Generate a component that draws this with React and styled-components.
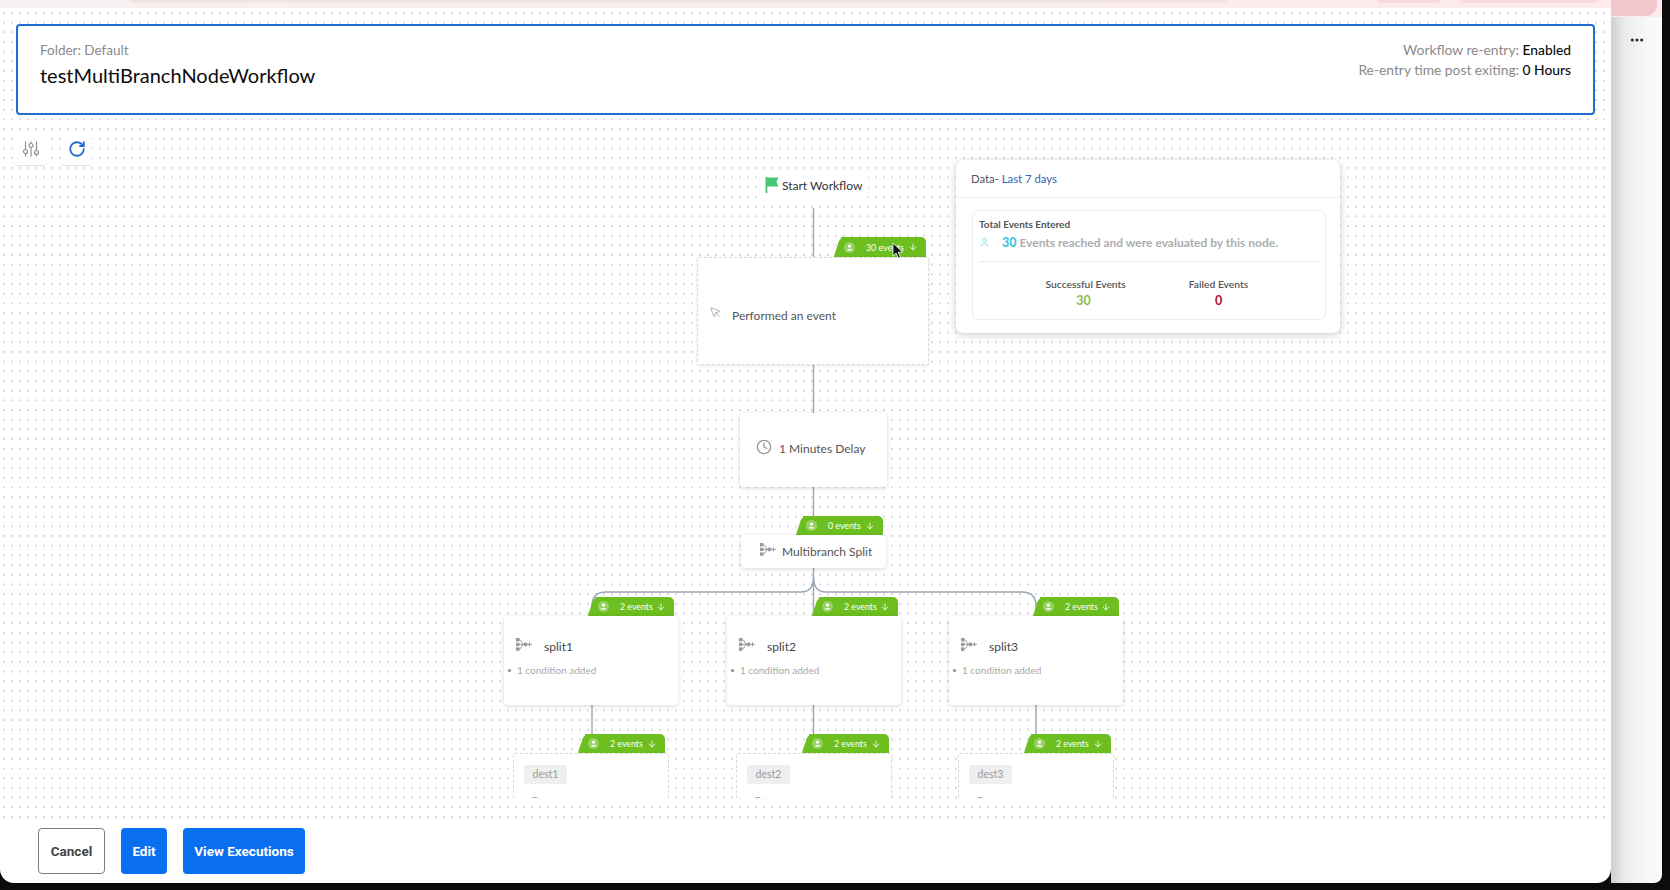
import styled, { createGlobalStyle } from 'styled-components'
import { ArrowDown, Clock, Ellipsis, MousePointer, RotateCw, User } from 'lucide-react'

const GlobalStyle = createGlobalStyle`
  html, body {
    margin: 0;
    background: #0d0c0a;
  }
  * {
    box-sizing: border-box;
  }
`

const Page = styled('div')`
  display: flex;
  width: 1670px;
  height: 890px;
  overflow: hidden;
  background: #0d0c0a;
  font-family: Lato, 'Noto Sans', sans-serif;
  color: #555;
`
const Modal = styled('div')`
  display: flex;
  flex-direction: column;
  width: 1611px;
  height: 883px;
  background: #fff;
  border-radius: 0 0 14px 14px;
  overflow: hidden;
`
const TopStrip = styled('div')`
  display: flex;
  gap: 20px;
  height: 8px;
  padding-left: 130px;
  background: linear-gradient(90deg, #f8f1f1, #fdeaed);
`
const TopPill = styled('div')`
  width: ${({ $width }) => $width}px;
  margin-left: ${({ $offset }) => $offset || 0}px;
  height: 3px;
  border-radius: 0 0 6px 6px;
  background: ${({ $color }) => $color};
`
const Canvas = styled('div')`
  display: flex;
  flex-direction: column;
  flex: 1;
  padding: 16px 0 20px;
  background-color: #fff;
  background-image: radial-gradient(circle, #dadada 0.75px, transparent 1.1px);
  background-size: 8px 9.7px;
`
const HeaderCard = styled('div')`
  display: flex;
  justify-content: space-between;
  height: 91px;
  margin: 0 16px;
  padding: 14px 22px 0 22px;
  background: #fff;
  border: 2px solid #1f6fd0;
  border-radius: 4px;
`
const FolderLabel = styled('div')`
  margin-top: 1px;
  font-size: 13.5px;
  line-height: 18px;
  color: #8a8a8a;
`
const WorkflowName = styled('div')`
  margin-top: 4px;
  font-size: 20px;
  line-height: 24px;
  color: #0c0c0c;
`
const MetaColumn = styled('div')`
  display: flex;
  flex-direction: column;
  align-items: flex-end;
`
const MetaRow = styled('div')`
  font-size: 13.8px;
  line-height: 19.5px;
  color: #8a8a8a;
  b {
    font-weight: 500;
    color: #0c0c0c;
  }
`
const Toolbar = styled('div')`
  display: flex;
  gap: 15px;
  height: 32px;
  margin: 18px 0 0 15px;
`
const ToolButton = styled('div')`
  display: flex;
  align-items: center;
  justify-content: center;
  width: 31px;
  background: #fff;
  border-radius: 3px;
  box-shadow: 0 1px 1px rgba(0, 0, 0, 0.12);
  color: ${({ $color }) => $color};
`
const Diagram = styled('div')`
  position: relative;
  flex: 1;
`
const Connectors = styled('svg')`
  position: absolute;
  left: 0;
  top: 0;
  width: 100%;
  height: 100%;
`
const StartChip = styled('div')`
  position: absolute;
  left: 760px;
  top: 5px;
  display: flex;
  align-items: center;
  gap: 3px;
  width: 108px;
  height: 30px;
  padding-left: 5px;
  background: #fff;
  border-radius: 4px;
  box-shadow: 0 0 2px rgba(0, 0, 0, 0.08);
  font-size: 12px;
  white-space: nowrap;
  color: #333;
`
const NodeCard = styled('div')`
  position: absolute;
  left: ${({ $x }) => $x}px;
  top: ${({ $y }) => $y}px;
  width: ${({ $w }) => $w}px;
  height: ${({ $h }) => $h}px;
  padding: ${({ $pt }) => $pt || 0}px 0 ${({ $pb }) => $pb || 0}px;
  display: flex;
  align-items: center;
  background: #fff;
  border-radius: 4px;
  box-shadow: 0 1px 4px rgba(0, 0, 0, 0.16);
  font-size: 12px;
  color: #555;
`
const DashedCard = styled(NodeCard)`
  border: 1px dashed #d9d9d9;
  border-radius: 2px;
  box-shadow: 0 1px 3px rgba(0, 0, 0, 0.1);
`
const SplitCard = styled('div')`
  position: absolute;
  left: ${({ $x }) => $x}px;
  top: 451px;
  width: 174px;
  height: 89px;
  padding: 22px 0 0 12px;
  background: #fff;
  border-radius: 4px;
  box-shadow: 0 1px 4px rgba(0, 0, 0, 0.16);
`
const SplitTitle = styled('div')`
  display: flex;
  align-items: center;
  gap: 11px;
  font-size: 12px;
  line-height: 18px;
  color: #444;
  svg {
    margin-top: -5px;
  }
`
const ConditionRow = styled('div')`
  display: flex;
  align-items: center;
  gap: 6px;
  margin: 7px 0 0 -8px;
  font-size: 10px;
  line-height: 14px;
  color: #a8a8a8;
  &::before {
    content: '';
    width: 3px;
    height: 3px;
    border-radius: 50%;
    background: #888;
  }
`
const DestCard = styled('div')`
  position: absolute;
  left: ${({ $x }) => $x}px;
  top: 588px;
  width: 156px;
  height: 45px;
  overflow: hidden;
  padding: 11px 0 0 10px;
  background: #fff;
  border: 1px dashed #d9d9d9;
  border-bottom: 0;
  border-radius: 2px 2px 0 0;
`
const DestChip = styled('div')`
  width: 43px;
  height: 19px;
  background: #efefef;
  border-radius: 2px;
  font-size: 10.5px;
  line-height: 19px;
  text-align: center;
  color: #9a9a9a;
`
const DestDot = styled('div')`
  width: 12px;
  height: 12px;
  margin: 13px 0 0 5px;
  border: 1.5px solid #999;
  border-radius: 50%;
`
const Badge = styled('div')`
  position: absolute;
  left: ${({ $x }) => $x + 7}px;
  top: ${({ $y }) => $y}px;
  width: ${({ $w }) => $w - 7}px;
  height: ${({ $h }) => $h || 19}px;
  display: flex;
  align-items: center;
  padding-left: 3px;
  background: #6cbf1f;
  border-radius: 0 5px 0 0;
  font-size: 8.8px;
  color: #fff;
  &::before {
    content: '';
    position: absolute;
    left: -4px;
    top: 0;
    bottom: 0;
    width: 14px;
    background: #6cbf1f;
    border-radius: 5px 0 0 0;
    transform: skewX(-18deg);
  }
`
const BadgeIcon = styled('svg')`
  position: relative;
  width: 11px;
  height: 11px;
  margin-right: 11px;
`
const BadgeText = styled('span')`
  position: relative;
  white-space: nowrap;
`
const BadgeArrow = styled('span')`
  display: flex;
  margin-left: auto;
  margin-right: 8px;
`
const Tooltip = styled('div')`
  position: absolute;
  left: 956px;
  top: -5px;
  width: 384px;
  height: 173px;
  background: #fff;
  border-radius: 8px;
  box-shadow: 0 2px 8px rgba(0, 0, 0, 0.2);
`
const TooltipHead = styled('div')`
  height: 38px;
  padding-left: 15px;
  border-bottom: 1.5px solid #ececec;
  font-size: 11.3px;
  line-height: 38px;
  color: #555;
  span {
    color: #2f63b5;
  }
`
const TooltipBody = styled('div')`
  height: 110px;
  margin: 12px 14px 0 16px;
  padding: 6px 6px 0;
  border: 1px solid #ececec;
  border-radius: 7px;
`
const TotalTitle = styled('div')`
  font-size: 10px;
  font-weight: 700;
  line-height: 15px;
  color: #555;
`
const TotalRow = styled('div')`
  display: flex;
  align-items: center;
  gap: 12px;
  height: 30px;
  padding-bottom: 8px;
  border-bottom: 1px solid #ececec;
  font-size: 12px;
  line-height: 15px;
  font-weight: 700;
  color: #adadad;
  b {
    font-size: 12.5px;
    color: #3cc6e2;
  }
`
const Stats = styled('div')`
  display: flex;
  justify-content: center;
  gap: 59px;
  margin-top: 15px;
  padding-left: 4px;
`
const Stat = styled('div')`
  width: 76px;
  text-align: center;
  font-size: 10.3px;
  line-height: 15px;
  color: #555;
  font-weight: 600;
  white-space: nowrap;
  b {
    display: block;
    margin-top: 1px;
    font-size: 12.5px;
    font-weight: 700;
    color: ${({ $color }) => $color};
  }
`
const Cursor = styled('svg')`
  position: absolute;
  left: 892px;
  top: 77px;
  width: 12px;
  height: 17px;
`
const Footer = styled('div')`
  display: flex;
  gap: 16px;
  height: 65px;
  padding: 10px 0 0 38px;
`
const Button = styled('div')`
  display: flex;
  align-items: center;
  justify-content: center;
  width: ${({ $w }) => $w}px;
  height: 46px;
  border-radius: 4px;
  font-family: Roboto, sans-serif;
  font-size: 13.5px;
  font-weight: 700;
  background: ${({ $outline }) => ($outline ? '#fff' : '#0a6fee')};
  border: ${({ $outline }) => ($outline ? '1px solid #7d7d7d' : '0')};
  color: ${({ $outline }) => ($outline ? '#444' : '#fff')};
`
const BackPanel = styled('div')`
  display: flex;
  flex-direction: column;
  width: 51px;
  height: 883px;
  border-radius: 0 0 8px 0;
  overflow: hidden;
  background: linear-gradient(90deg, #cfcfcf, #ececec 14px, #f7f7f7 34px, #fbfbfb);
`
const BackStrip = styled('div')`
  height: 17px;
  padding-right: 5px;
  background: #fdeaed;
`
const BackPill = styled('div')`
  height: 16px;
  background: #f3c6cc;
  border-radius: 0 0 12px 0;
`
const MoreIcon = styled('div')`
  display: flex;
  justify-content: center;
  margin-top: 15px;
  color: #222;
`
const IconSlot = styled('span')`
  display: flex;
  margin: ${({ $margin }) => $margin};
`

const FlagIcon = () => (
  <svg width="14" height="16" viewBox="0 0 14 16">
    <rect x="0.5" y="0" width="1.8" height="16" fill="#48c774" />
    <path d="M2 0.5 H13.5 L11.5 5 L13.5 9.5 H2 Z" fill="#48c774" />
  </svg>
)

const BranchIcon = () => (
  <svg width="17" height="13" viewBox="0 0 17 13" fill="none" stroke="#999" strokeWidth="1">
    <rect x="0.5" y="0.5" width="2.4" height="2.4" fill="#999" />
    <rect x="0.5" y="5.2" width="2.4" height="2.4" fill="#999" />
    <rect x="0.5" y="9.9" width="2.4" height="2.4" fill="#999" />
    <path d="M3 1.7 C6 1.7 5.5 6.4 8 6.4 M3 6.4 H8 M3 11 C6 11 5.5 6.4 8 6.4" />
    <circle cx="9.5" cy="6.4" r="1.6" fill="#999" />
    <path d="M11 6.4 H16 M13.5 4.4 V8.4" />
  </svg>
)

const TuneIcon = () => (
  <svg width="16" height="16" viewBox="0 0 16 16" fill="none" stroke="#8f8f8f" strokeWidth="1.2">
    <path d="M2.5 0.5 V8.5 M2.5 12.5 V15.5 M8 0.5 V2.5 M8 6.5 V15.5 M13.5 0.5 V9.5 M13.5 13.5 V15.5" />
    <circle cx="2.5" cy="10.5" r="2" />
    <circle cx="8" cy="4.5" r="2" />
    <circle cx="13.5" cy="11.5" r="2" />
  </svg>
)

const EventBadge = ({ x, y, w, h, label }) => (
  <Badge $x={x} $y={y} $w={w} $h={h}>
    <BadgeIcon viewBox="0 0 12 12">
      <circle cx="6" cy="6" r="6" fill="rgba(255,255,255,0.3)" />
      <circle cx="6" cy="4.4" r="1.8" fill="#fff" />
      <path d="M2.8 9.4 C3 7.2 9 7.2 9.2 9.4 Z" fill="#fff" />
    </BadgeIcon>
    <BadgeText>{label}</BadgeText>
    <BadgeArrow>
      <ArrowDown size={10} strokeWidth={2} />
    </BadgeArrow>
  </Badge>
)

const splits = [
  { name: 'split1', x: 504, badge: 588 },
  { name: 'split2', x: 727, badge: 812 },
  { name: 'split3', x: 949, badge: 1033 },
]

const dests = [
  { name: 'dest1', x: 513, badge: 578 },
  { name: 'dest2', x: 736, badge: 802 },
  { name: 'dest3', x: 958, badge: 1024 },
]

const App = () => (
  <Page>
    <GlobalStyle />
    <Modal>
      <TopStrip>
        <TopPill $width={1097} $color="#f1e6e6" />
        <TopPill $width={63} $offset={130} $color="#fadadf" />
        <TopPill $width={137} $color="#fadadf" />
      </TopStrip>
      <Canvas>
        <HeaderCard>
          <div>
            <FolderLabel>Folder: Default</FolderLabel>
            <WorkflowName>testMultiBranchNodeWorkflow</WorkflowName>
          </div>
          <MetaColumn>
            <MetaRow>
              Workflow re-entry: <b>Enabled</b>
            </MetaRow>
            <MetaRow>
              Re-entry time post exiting: <b>0 Hours</b>
            </MetaRow>
          </MetaColumn>
        </HeaderCard>
        <Toolbar>
          <ToolButton>
            <TuneIcon />
          </ToolButton>
          <ToolButton $color="#1f6fd0">
            <RotateCw size={18} strokeWidth={2.4} />
          </ToolButton>
        </Toolbar>
        <Diagram>
          <Connectors fill="none" stroke="#9aa7b5" strokeWidth="1.4">
            <path d="M813.5 43 V427" />
            <path d="M813.5 412 Q813.5 427 801 427 H606 Q592 427 592 441 V452" />
            <path d="M813.5 412 Q813.5 427 826 427 H1022 Q1036 427 1036 441 V452" />
            <path d="M813.5 427 V452" />
            <path d="M592 540 V570 M813.5 540 V570 M1036 540 V570" />
          </Connectors>
          <StartChip>
            <FlagIcon />
            Start Workflow
          </StartChip>
          <EventBadge x={834} y={72} w={92} h={20} label="30 events" />
          <DashedCard $x={697} $y={92} $w={232} $h={108} $pt={8}>
            <IconSlot $margin="-6px 10px 0 11px">
              <MousePointer size={13} color="#9aa3a8" strokeWidth={1.5} />
            </IconSlot>
            Performed an event
          </DashedCard>
          <NodeCard $x={740} $y={248} $w={147} $h={74} $pb={4}>
            <IconSlot $margin="-2px 7px 0 16px">
              <Clock size={16} color="#999" strokeWidth={2} />
            </IconSlot>
            1 Minutes Delay
          </NodeCard>
          <EventBadge x={796} y={351} w={87} label="0 events" />
          <NodeCard $x={741} $y={370} $w={145} $h={33}>
            <IconSlot $margin="-4px 5px 0 19px">
              <BranchIcon />
            </IconSlot>
            Multibranch Split
          </NodeCard>
          {splits.map((split) => (
            <div key={split.name}>
              <EventBadge x={split.badge} y={432} w={86} label="2 events" />
              <SplitCard $x={split.x}>
                <SplitTitle>
                  <BranchIcon />
                  {split.name}
                </SplitTitle>
                <ConditionRow>1 condition added</ConditionRow>
              </SplitCard>
            </div>
          ))}
          {dests.map((dest) => (
            <div key={dest.name}>
              <EventBadge x={dest.badge} y={569} w={87} label="2 events" />
              <DestCard $x={dest.x}>
                <DestChip>{dest.name}</DestChip>
                <DestDot />
              </DestCard>
            </div>
          ))}
          <Tooltip>
            <TooltipHead>
              Data- <span>Last 7 days</span>
            </TooltipHead>
            <TooltipBody>
              <TotalTitle>Total Events Entered</TotalTitle>
              <TotalRow>
                <User size={11} color="#6fd3e4" strokeWidth={1.6} />
                <span>
                  <b>30</b> Events reached and were evaluated by this node.
                </span>
              </TotalRow>
              <Stats>
                <Stat $color="#8dbb4c">
                  Successful Events
                  <b>30</b>
                </Stat>
                <Stat $color="#b00f31">
                  Failed Events
                  <b>0</b>
                </Stat>
              </Stats>
            </TooltipBody>
          </Tooltip>
          <Cursor viewBox="0 0 12 17">
            <path d="M1 1 V14 L4 11 L6.2 16 L8.4 15 L6.2 10.2 H10.5 Z" fill="#111" stroke="#fff" strokeWidth="0.8" />
          </Cursor>
        </Diagram>
      </Canvas>
      <Footer>
        <Button $w={67} $outline>
          Cancel
        </Button>
        <Button $w={46}>Edit</Button>
        <Button $w={122}>View Executions</Button>
      </Footer>
    </Modal>
    <BackPanel>
      <BackStrip>
        <BackPill />
      </BackStrip>
      <MoreIcon>
        <Ellipsis size={16} strokeWidth={2.6} />
      </MoreIcon>
    </BackPanel>
  </Page>
)

export default App
